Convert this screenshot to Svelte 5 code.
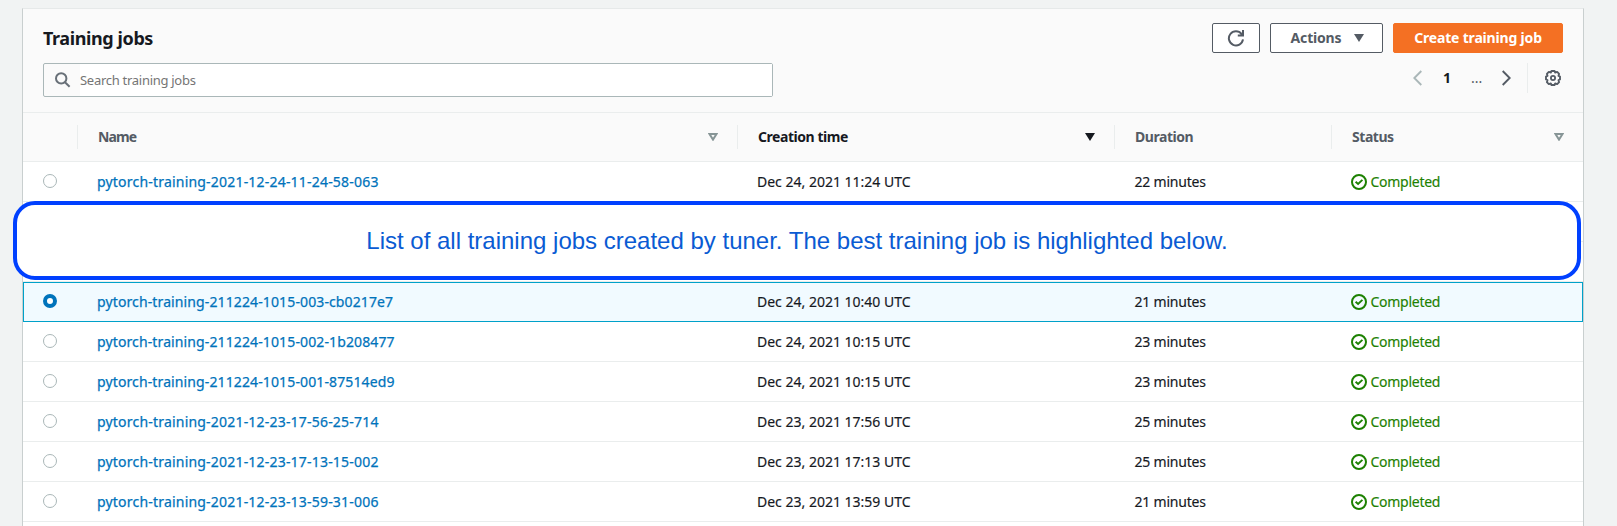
<script>
  const jobs = [
    { name: 'pytorch-training-2021-12-24-11-24-58-063', created: 'Dec 24, 2021 11:24 UTC', duration: '22 minutes' },
    { gap: true },
    { gap: true },
    { name: 'pytorch-training-211224-1015-003-cb0217e7', created: 'Dec 24, 2021 10:40 UTC', duration: '21 minutes', selected: true },
    { name: 'pytorch-training-211224-1015-002-1b208477', created: 'Dec 24, 2021 10:15 UTC', duration: '23 minutes' },
    { name: 'pytorch-training-211224-1015-001-87514ed9', created: 'Dec 24, 2021 10:15 UTC', duration: '23 minutes' },
    { name: 'pytorch-training-2021-12-23-17-56-25-714', created: 'Dec 23, 2021 17:56 UTC', duration: '25 minutes' },
    { name: 'pytorch-training-2021-12-23-17-13-15-002', created: 'Dec 23, 2021 17:13 UTC', duration: '25 minutes' },
    { name: 'pytorch-training-2021-12-23-13-59-31-006', created: 'Dec 23, 2021 13:59 UTC', duration: '21 minutes' }
  ];
</script>

<main>
  <section class="card">
    <header>
      <div class="top">
        <h2>Training jobs</h2>
        <div class="actions">
          <button class="btn refresh" aria-label="Refresh">
            <svg width="18" height="18" viewBox="0 0 18 18" fill="none" stroke="#545b64" stroke-width="2">
              <path d="M16 10.4A7.1 7.1 0 1 1 14.6 5" /><path d="M10.8 6.4H16V1" /><path d="M13 6L16 3V6Z" fill="#545b64" stroke="none" />
            </svg>
          </button>
          <button class="btn menu"><span>Actions</span>
            <svg width="10" height="8" viewBox="0 0 10 8"><path d="M0 0H10L5 8Z" fill="#545b64" /></svg>
          </button>
          <button class="btn primary"><span>Create training job</span></button>
        </div>
      </div>
      <div class="tools">
        <div class="search">
          <svg width="16" height="16" viewBox="0 0 16 16" fill="none" stroke="#687078" stroke-width="2">
            <circle cx="6.2" cy="6.4" r="5.2" /><path d="M10 10.2L14.6 14.8" />
          </svg>
          <div class="field"><span>Search training jobs</span></div>
        </div>
        <nav>
          <svg class="prev" width="9" height="16" viewBox="0 0 9 16" fill="none" stroke="#aab7b8" stroke-width="1.9"><path d="M8.3 1L1.3 8L8.3 15" /></svg>
          <b>1</b>
          <span class="dots">...</span>
          <svg class="next" width="9" height="16" viewBox="0 0 9 16" fill="none" stroke="#545b64" stroke-width="1.9"><path d="M.7 1L7.7 8L.7 15" /></svg>
          <i></i>
          <svg class="gear" width="16" height="16" viewBox="0 0 16 16" fill="none" stroke="#545b64" stroke-linejoin="round">
            <path stroke-width="1.9" d="M6.5 1H9.5L10.2 2.5L12.2 1.9L14.1 3.8L13.5 5.8L15 6.5V9.5L13.5 10.2L14.1 12.2L12.2 14.1L10.2 13.5L9.5 15H6.5L5.8 13.5L3.8 14.1L1.9 12.2L2.5 10.2L1 9.5V6.5L2.5 5.8L1.9 3.8L3.8 1.9L5.8 2.5Z" />
            <circle cx="8" cy="8" r="2.1" stroke-width="1.8" />
          </svg>
        </nav>
      </div>
    </header>

    <div class="row head">
      <div></div>
      <div><span class="first">Name</span>
        <svg width="10" height="8" viewBox="0 0 10 8"><path d="M1.5 1H8.5L5 6.6Z" fill="none" stroke="#879596" stroke-width="2" /></svg>
      </div>
      <div class="sorted"><span>Creation time</span>
        <svg width="10" height="8" viewBox="0 0 10 8"><path d="M0 0H10L5 8Z" fill="#16191f" /></svg>
      </div>
      <div><span>Duration</span></div>
      <div><span>Status</span>
        <svg width="10" height="8" viewBox="0 0 10 8"><path d="M1.5 1H8.5L5 6.6Z" fill="none" stroke="#879596" stroke-width="2" /></svg>
      </div>
    </div>

    {#each jobs as job}
      {#if job.gap}
        <div class="row"></div>
      {:else}
        <div class="row job" class:selected={job.selected}>
          <div class="pick"><span class="radio"></span></div>
          <div class="name" class:tight={job.name.includes('211224')}>{job.name}</div>
          <div class="created">{job.created}</div>
          <div class="duration">{job.duration}</div>
          <div class="status">
            <svg width="16" height="16" viewBox="0 0 16 16" fill="none" stroke="#1d8102">
              <circle cx="8" cy="8" r="7" stroke-width="2" /><path stroke-width="1.9" d="M4.6 7.7L7.1 10L11.4 5.9" />
            </svg>
            <span>Completed</span>
          </div>
        </div>
      {/if}
    {/each}
  </section>
  <div class="note">List of all training jobs created by tuner. The best training job is highlighted below.</div>
</main>

<style>
  :global(body) { background: #f2f3f3; }
  main {
    position: relative;
    box-sizing: border-box;
    width: 1617px;
    height: 526px;
    padding: 8px 33px 0 22px;
    overflow: hidden;
    background: #f1f3f3;
    font: 14px/22px "Noto Sans", sans-serif;
    color: #16191f;
  }
  .card {
    box-sizing: border-box;
    height: 540px;
    border: 1px solid #c9cfcf;
    border-top-color: #e6e9e9;
    background: #fff;
  }
  header { box-sizing: border-box; height: 104px; padding: 14px 20px 0; background: #fafafa; border-bottom: 1px solid #eaeded; }
  .top, .tools, .actions, nav { display: flex; }
  .top { justify-content: space-between; height: 40px; }
  h2 { margin: 4px 0 0; font-size: 18px; line-height: 22px; font-weight: 700; letter-spacing: -0.4px; }
  .actions { gap: 10px; }
  .btn {
    box-sizing: border-box;
    display: flex;
    align-items: center;
    justify-content: center;
    height: 30px;
    padding: 0 0 1px;
    border: 1px solid #545b64;
    border-radius: 2px;
    background: #fff;
    color: #545b64;
    font: 700 14px/20px "Noto Sans", sans-serif;
    letter-spacing: -0.18px;
  }
  .refresh { width: 48px; }
  .menu { width: 113px; padding-left: 2px; gap: 13px; }
  .primary { width: 170px; border-color: #f47023; background: #f47023; color: #fff; }
  .tools { justify-content: space-between; }
  .search {
    box-sizing: border-box;
    display: flex;
    align-items: center;
    width: 730px;
    height: 34px;
    padding-left: 11px;
    border: 1px solid #aab7b8;
    border-radius: 2px;
  }
  .field { flex: 1; height: 32px; margin-left: 9px; background: #fff; color: #757575; font-size: 13px; line-height: 33px; letter-spacing: -0.28px; }
  nav { align-items: center; height: 30px; }
  nav b { width: 8px; margin-left: 21px; }
  .dots { width: 12px; margin-left: 20px; color: #545b64; }
  .next { margin-left: 19px; }
  nav i { width: 1px; height: 30px; margin-left: 16px; background: #eaeded; }
  .gear { margin: 0 2px 0 17px; }
  .row {
    box-sizing: border-box;
    display: grid;
    grid-template-columns: 55px 660px 377px 217px 251px;
    height: 40px;
    border-bottom: 1px solid #eaeded;
  }
  .head { height: 49px; align-items: center; background: #fafafa; color: #545b64; font-weight: 700; letter-spacing: -0.45px; }
  .head div { box-sizing: border-box; display: flex; align-items: center; justify-content: space-between; height: 24px; padding: 0 19px 0 20px; border-right: 1px solid #eaeded; }
  .head div:last-child { border-right: 0; }
  .head .sorted { color: #16191f; }
  .head .first { letter-spacing: -0.85px; }
  .job { align-items: center; -webkit-text-stroke: 0.15px currentColor; }
  .job > div { padding-left: 19px; }
  .job > .pick { padding-left: 20px; display: flex; }
  .radio { box-sizing: border-box; width: 14px; height: 14px; margin-top: -1px; border: 1px solid #aab7b8; border-radius: 50%; background: #fff; }
  .name { color: #0073bb; letter-spacing: 0.2px; -webkit-text-stroke: 0.25px #0073bb; }
  .name.tight { letter-spacing: 0.12px; }
  .job > .duration { padding-left: 19.5px; letter-spacing: -0.2px; }
  .status { display: flex; align-items: center; gap: 3.5px; color: #1d8102; letter-spacing: -0.27px; }
  .selected { position: relative; background: #f1faff; border-bottom-color: #00a1c9; box-shadow: inset 1px 1px #00a1c9, inset -1px 0 #00a1c9; }
  .selected .radio { border: 4px solid #0073bb; }
  .note {
    position: absolute;
    left: 13px;
    top: 201px;
    box-sizing: border-box;
    width: 1568px;
    height: 79px;
    border: 4px solid #0040ff;
    border-radius: 22px;
    background: #fff;
    color: #0a5bd3;
    font: 24px/71px "Liberation Sans", Arial, sans-serif;
    text-align: center;
  }
</style>
